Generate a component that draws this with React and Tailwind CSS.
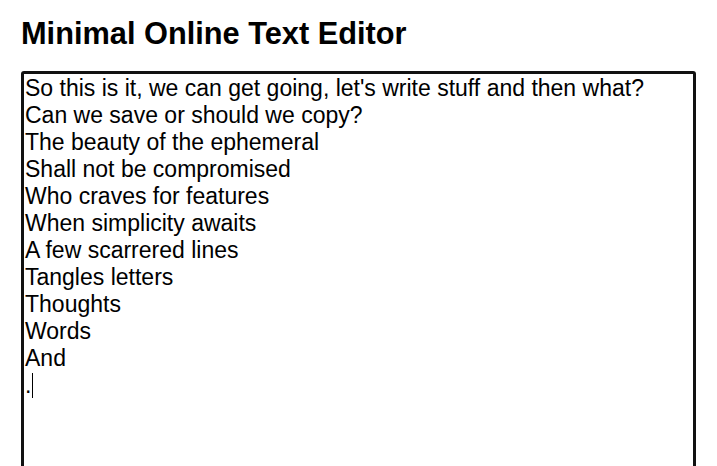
const lines = [
  "So this is it, we can get going, let's write stuff and then what?",
  'Can we save or should we copy?',
  'The beauty of the ephemeral',
  'Shall not be compromised',
  'Who craves for features',
  'When simplicity awaits',
  'A few scarrered lines',
  'Tangles letters',
  'Thoughts',
  'Words',
  'And',
]

export default function App() {
  return (
    <div className="h-screen overflow-hidden bg-white px-[21px] pt-[17px] font-['Liberation_Sans',Arial,sans-serif] text-black">
      <h1 className="text-[30.75px] font-bold leading-[34px]">Minimal Online Text Editor</h1>
      <div className="mt-[20px] h-[420px] w-[675px] rounded-[3px] border-[3px] border-[#111] px-[1px] pt-[1px] text-[23px] leading-[27px]">
        {lines.map((l, i) => (
          <div key={i} className="whitespace-pre">{l}</div>
        ))}
        <div className="flex items-center">
          <span>.</span>
          <span className="ml-[1px] inline-block h-[25px] w-px bg-black" />
        </div>
      </div>
    </div>
  )
}
